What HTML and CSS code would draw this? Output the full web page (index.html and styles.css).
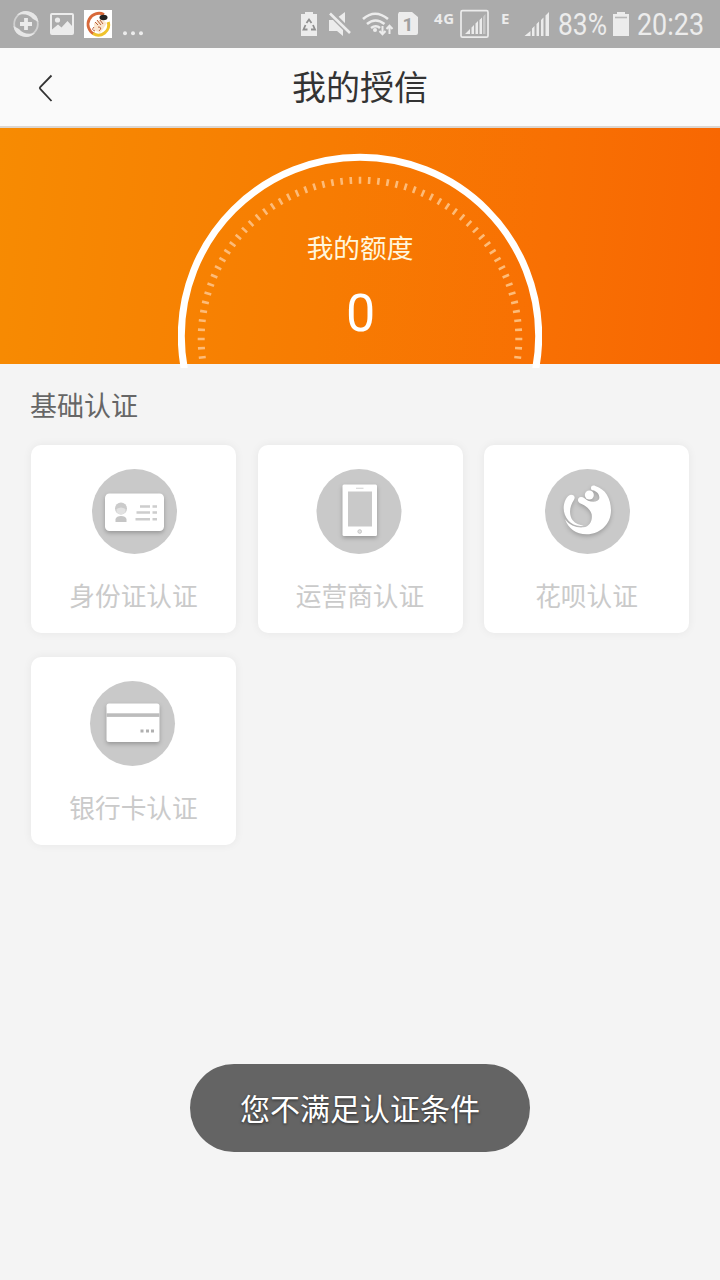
FILE: index.html
```html
<!DOCTYPE html>
<html lang="zh-CN">
<head>
  <meta charset="UTF-8" />
  <meta name="viewport" content="width=device-width, initial-scale=1.0"/>
  <title>我的授信</title>
  <link rel="stylesheet" href="styles.css">
</head>
<body>

  <!-- 状态栏 -->
  <div class="status-bar">
    <svg class="status-left" width="150" height="48" viewBox="0 0 150 48">
      <circle cx="26" cy="24" r="11.800" fill="none" stroke="#d0d0d0" stroke-width="1.800"/>
      <path d="M17 15 A12.500 12.500 0 0 1 38.500 22 L33 19 Q28 12.500 17 15Z M35 33 A12.500 12.500 0 0 1 13.500 26 L19 29 Q24 35.500 35 33Z" fill="#e6e6e6"/>
      <path d="M26 18v12M20 24h12" stroke="#ececec" stroke-width="3.800"/>
      <path fill-rule="evenodd" fill="#ececec" d="M52 13h20a2 2 0 0 1 2 2v18a2 2 0 0 1-2 2H52a2 2 0 0 1-2-2V15a2 2 0 0 1 2-2Z M52 15V29.500L58 24.500L61.500 27.500L67.500 21L72 26V15Z"/>
      <circle cx="57.500" cy="20" r="2.600" fill="#ececec"/>
      <rect x="84" y="10" width="28" height="28" fill="#fff"/>
      <path d="M104 14.500 A10.300 10.300 0 1 0 94 34" fill="none" stroke="#d8693a" stroke-width="2.800"/>
      <path d="M93 33.500 A10.300 10.300 0 0 0 108.300 22" fill="none" stroke="#efc22c" stroke-width="3"/>
      <path d="M94 23l7-4 6 4-4 6-3 4-6-3z" fill="#fbe6cf"/>
      <path d="M95 22l3 3M97 20l4 5M100 20l3 4M94 27q-3 3 1 4M98 27q5 0 1 4" fill="none" stroke="#b8603a" stroke-width="1"/>
      <ellipse cx="103.500" cy="17.500" rx="4" ry="2.700" fill="#222"/>
      <circle cx="125" cy="33.300" r="2" fill="#ececec"/>
      <circle cx="133" cy="33.300" r="2" fill="#ececec"/>
      <circle cx="141" cy="33.300" r="2" fill="#ececec"/>
    </svg>
    <svg class="status-right" width="420" height="48" viewBox="300 0 420 48">
      <g fill="#ececec">
        <path d="M301 14h4v-2h8v2h4v22h-16z"/>
        <path d="M329 20h4l10 10v6l-6-5h-8zM337 18l8-6v14z"/>
        <path d="M399 12h13l6 5v16a2 2 0 0 1-2 2h-17a1.500 1.500 0 0 1-1-1.500V14z"/>
        <path d="M465 34l5-5v5zM471.500 34v-6.500l2.500-2.500v9zM475.500 34v-10.500l2.500-2.500v13zM479.500 34v-14l2.500-2.500v16.500z"/>
        <path d="M483 34v-17.500l2.500-2.500v20z" opacity=".45"/>
        <path d="M524.500 36l6-5v5zM532 36v-7.500l2.500-2.500v10zM536.500 36v-12l2.500-2.500v14.500zM541 36v-16l2.500-2.500v18.500zM545.500 36v-20.500l3.500-3.500v24z"/>
        <path d="M613 14h4v-2h8v2h4v22h-16z"/>
      </g>
      <path d="M615 17.500h12" stroke="#b8b8b8" stroke-width="1.600"/>
      <path d="M331.500 11.500l20 20" stroke="#ababab" stroke-width="2.500"/>
      <path d="M330 13.500l20 19.500" stroke="#ececec" stroke-width="2.600"/>
      <g fill="none" stroke="#8f8f8f" stroke-width="1.800">
        <path d="M306.500 23l2.500-3.500 2.500 3.500M313 25l2 4.500h-4M307.500 29.500h-4l2-4.500"/>
      </g>
      <g fill="none" stroke="#ececec" stroke-width="2.600">
        <path d="M363 19q12-10.500 25 0M367 24q8.500-7 17.500 0M371 28q5-3.500 9 0"/>
      </g>
      <circle cx="375" cy="30" r="2" fill="#ececec"/>
      <path d="M382.500 26v8M379.500 31l3 3.300 3-3.300M389.500 34v-8M386.500 29l3-3.300 3 3.300" fill="none" stroke="#ececec" stroke-width="2"/>
      <rect x="461" y="10.700" width="27" height="26.500" rx="1.500" fill="none" stroke="#ececec" stroke-width="1.700"/>
      <text class="sim" x="402.500" y="31">1</text>
      <text class="net" x="434" y="24" textLength="20">4G</text>
      <text class="net" x="501" y="24">E</text>
      <text class="clock" x="558" y="35" textLength="49" lengthAdjust="spacingAndGlyphs">83%</text>
      <text class="clock" x="637" y="35" textLength="67" lengthAdjust="spacingAndGlyphs">20:23</text>
    </svg>
  </div>

  <!-- 标题栏 -->
  <div class="header">
    <svg class="back" width="16" height="28" viewBox="0 0 16 28">
      <path d="M14.500 1.500L3.200 13.200Q2.400 14 3.200 14.800L14.500 27" fill="none" stroke="#333" stroke-width="1.800"/>
    </svg>
    <h1>我的授信</h1>
  </div>

  <!-- 额度 -->
  <div class="banner">
    <svg class="dial" width="364" height="215" viewBox="178 153 364 215">
      <clipPath id="dial-clip"><rect x="178" y="153" width="364" height="211"/></clipPath>
      <circle cx="360" cy="336" r="178.700" fill="none" stroke="#fff" stroke-width="7"/>
      <circle class="ticks" cx="360" cy="339" r="158.800" pathLength="1080" clip-path="url(#dial-clip)"/>
    </svg>
    <p class="banner-label">我的额度</p>
    <p class="banner-num">0</p>
  </div>

  <!-- 基础认证 -->
  <div class="section">
    <h2>基础认证</h2>
    <div class="cards">
      <div class="card">
        <svg class="icon" viewBox="-1 0 85 85">
          <circle cx="42.500" cy="42.500" r="42.500" fill="#c9c9c9"/>
          <rect class="raised" x="13" y="24.500" width="59" height="37.500" rx="4.500"/>
          <circle cx="29" cy="39.500" r="6" fill="#cbcbcb"/>
          <path d="M24.500 40q4.500-3 9 0v3q-4.500 5-9 0z" fill="#e2e2e2"/>
          <path d="M23.500 53v-3q1-3 5.500-3t5.500 3v3z" fill="#c6c6c6"/>
          <path d="M48 37.500h10M60.500 37.500h4.500M44.500 43.500H58M60.500 43.500h4.500M43.500 50.300H58M60.500 50.300h4.500" stroke="#cdcdcd" stroke-width="2.400"/>
        </svg>
        <span>身份证认证</span>
      </div>
      <div class="card">
        <svg class="icon" viewBox="1.500 0 85 85">
          <circle cx="42.500" cy="42.500" r="42.500" fill="#c9c9c9"/>
          <rect class="raised" x="26" y="15.500" width="34.500" height="51.500" rx="1.500"/>
          <rect x="31.500" y="22.500" width="24" height="35" fill="#c9c9c9"/>
          <path d="M39.500 19.300h7.500" stroke="#d8d8d8" stroke-width="1.200"/>
          <circle cx="43.200" cy="62.500" r="1.800" fill="#e4e4e4" stroke="#c4c4c4" stroke-width="1"/>
        </svg>
        <span>运营商认证</span>
      </div>
      <div class="card">
        <svg class="icon" viewBox="204 102 255 255">
          <circle cx="334.500" cy="229.500" r="127.500" fill="#c9c9c9"/>
          <g class="raised raised-lg">
            <path d="M345 159C345 152 352 150 358 153C388 162 405 190 405 226C405 268 372 298 332 298C300 298 277 280 267 253C281 272 302 279 322 277C342 275 350 256 347 238C343 222 330 213 312 205C303 200 304 187 315 186C323 186 328 192 336 197C350 203 368 201 370 190C371 178 362 168 350 166C346 165 345 162 345 159Z"/>
            <path d="M285 179C294 179 299 186 294 194C280 214 278 240 290 256C298 266 310 271 323 272C288 278 263 250 263 220C263 202 272 180 285 179Z"/>
            <circle cx="340" cy="180" r="13.500"/>
          </g>
        </svg>
        <span>花呗认证</span>
      </div>
      <div class="card">
        <svg class="icon" viewBox="1 0 85 85">
          <circle cx="42.500" cy="42.500" r="42.500" fill="#c9c9c9"/>
          <rect class="raised" x="16.500" y="22.500" width="53" height="38.500" rx="2.500"/>
          <rect x="16.500" y="32.300" width="53" height="3.600" fill="#bcbcbc"/>
          <path d="M50.500 50h3M56 50h3M61 50h3" stroke="#b0b0b0" stroke-width="2.800"/>
        </svg>
        <span>银行卡认证</span>
      </div>
    </div>
  </div>

  <div class="toast">您不满足认证条件</div>

</body>
</html>
```

FILE: styles.css
```css
body {
  margin: 0;
  min-height: 1280px;
  background: #f4f4f4;
  font-family: "Noto Sans CJK SC", sans-serif;
  color: #333;
}

h1, h2, p {
  margin: 0;
  font-weight: normal;
}

svg {
  display: block;
}

.status-bar {
  height: 48px;
  background: #ababab;
  display: flex;
  justify-content: space-between;
}

.status-bar text {
  font-family: Roboto, sans-serif;
  fill: #ececec;
}

.status-bar .clock {
  font-size: 31px;
}

.status-bar .net {
  font-family: "Noto Sans", sans-serif;
  font-size: 15px;
  font-weight: bold;
}

.status-bar .sim {
  font-size: 19px;
  font-weight: bold;
  fill: #a0a0a0;
}

.header {
  height: 78px;
  background: #fafafa;
  border-bottom: 2px solid #dcd6d0;
  display: grid;
  grid-template-columns: 100px 1fr 100px;
  align-items: center;
}

.back {
  margin-left: 37px;
  margin-top: 2px;
}

.header h1 {
  font-size: 34px;
  line-height: 76px;
  height: 78px;
  text-align: center;
}

.banner {
  position: relative;
  height: 236px;
  background: linear-gradient(95deg, #f78b02 0%, #f77c02 45%, #f87003 75%, #f86602 100%);
  color: #fff;
  text-align: center;
  box-sizing: border-box;
  padding-top: 99px;
}

/* 圆环底部略微超出橙色区域 */
.dial {
  position: absolute;
  left: 178px;
  top: 25px;
}

.ticks {
  fill: none;
  stroke: #fdbb78;
  stroke-width: 7;
  stroke-dasharray: 2.8 7.2;
  stroke-dashoffset: 1.4;
}

.banner-label {
  font-size: 26.700px;
  line-height: 40px;
  color: #fff6dc;
}

.banner-num {
  font-family: Roboto, sans-serif;
  font-size: 52px;
  line-height: 60px;
  margin-top: 17px;
  padding-left: 1px;
}

.section {
  padding: 21px 31px 0;
}

.section h2 {
  font-size: 27px;
  line-height: 40px;
  color: #666;
  margin-left: -1px;
}

.cards {
  display: grid;
  grid-template-columns: repeat(3, 205px);
  column-gap: 21.500px;
  row-gap: 24px;
  margin-top: 20px;
}

.card {
  height: 188px;
  box-sizing: border-box;
  padding-top: 24px;
  background: #fff;
  border-radius: 10px;
  box-shadow: 0 0 10px rgba(0, 0, 0, 0.06);
  display: flex;
  flex-direction: column;
  align-items: center;
}

.icon {
  width: 85px;
  height: 85px;
  overflow: visible;
}

.raised {
  fill: #fff;
  filter: drop-shadow(0 2px 2px rgba(0, 0, 0, 0.25));
}

.raised-lg {
  filter: drop-shadow(0 6px 6px rgba(0, 0, 0, 0.22));
}

.card span {
  font-size: 25.700px;
  line-height: 38px;
  margin-top: 22px;
  color: #cacaca;
}

.toast {
  position: absolute;
  left: 190px;
  top: 1064px;
  width: 340px;
  height: 88px;
  border-radius: 44px;
  background: #646464;
  color: #fff;
  font-size: 30px;
  line-height: 86px;
  text-align: center;
  text-shadow: 0 1px 3px rgba(0, 0, 0, 0.6);
}
```
